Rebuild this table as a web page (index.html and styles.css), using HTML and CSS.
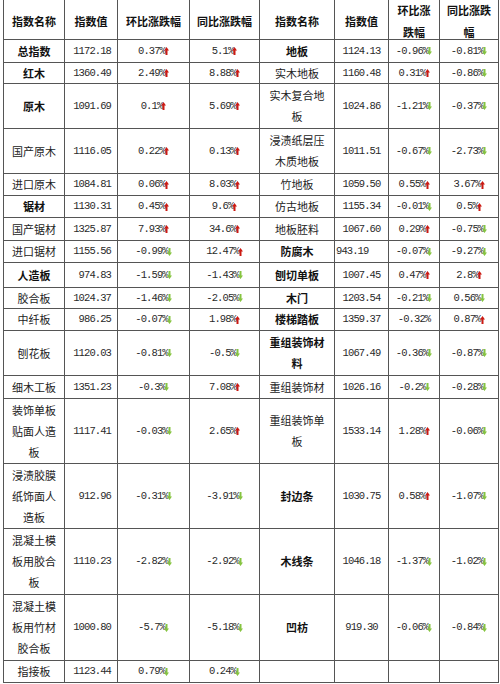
FILE: index.html
```html
<!DOCTYPE html>
<html lang="zh">
<head>
<meta charset="utf-8">
<title>指数表</title>
<link rel="stylesheet" href="styles.css">
</head>
<body>
<div class="sheet">
  <div class="hd">指数名称</div><div class="hd">指数值</div><div class="hd">环比涨跌幅</div><div class="hd">同比涨跌幅</div>
  <div class="hd">指数名称</div><div class="hd">指数值</div><div class="hd">环比涨跌幅</div><div class="hd">同比涨跌幅</div>

  <div class="nm b">总指数</div><div class="lv"><span class="n">1172.18</span></div>
  <div><span class="n">0.37%</span><svg class="ar up" viewBox="0 0 5 8"><path d="M2.5 0L5 3.5H3.5V8h-2V3.5H0z"/></svg></div>
  <div><span class="n">5.1%</span><svg class="ar up" viewBox="0 0 5 8"><path d="M2.5 0L5 3.5H3.5V8h-2V3.5H0z"/></svg></div>
  <div class="nm b">地板</div><div><span class="n">1124.13</span></div>
  <div><span class="n">-0.96%</span><svg class="ar dn" viewBox="0 0 5 8"><path d="M2.5 8L5 4.5H3.5V0h-2v4.5H0z"/></svg></div>
  <div><span class="n">-0.81%</span><svg class="ar dn" viewBox="0 0 5 8"><path d="M2.5 8L5 4.5H3.5V0h-2v4.5H0z"/></svg></div>

  <div class="nm b">红木</div><div class="lv"><span class="n">1360.49</span></div>
  <div><span class="n">2.49%</span><svg class="ar up" viewBox="0 0 5 8"><path d="M2.5 0L5 3.5H3.5V8h-2V3.5H0z"/></svg></div>
  <div><span class="n">8.88%</span><svg class="ar up" viewBox="0 0 5 8"><path d="M2.5 0L5 3.5H3.5V8h-2V3.5H0z"/></svg></div>
  <div class="nm">实木地板</div><div><span class="n">1160.48</span></div>
  <div><span class="n">0.31%</span><svg class="ar up" viewBox="0 0 5 8"><path d="M2.5 0L5 3.5H3.5V8h-2V3.5H0z"/></svg></div>
  <div><span class="n">-0.86%</span><svg class="ar dn" viewBox="0 0 5 8"><path d="M2.5 8L5 4.5H3.5V0h-2v4.5H0z"/></svg></div>

  <div class="nm b">原木</div><div class="lv"><span class="n">1091.69</span></div>
  <div><span class="n">0.1%</span><svg class="ar up" viewBox="0 0 5 8"><path d="M2.5 0L5 3.5H3.5V8h-2V3.5H0z"/></svg></div>
  <div><span class="n">5.69%</span><svg class="ar up" viewBox="0 0 5 8"><path d="M2.5 0L5 3.5H3.5V8h-2V3.5H0z"/></svg></div>
  <div class="nm">实木复合地板</div><div><span class="n">1024.86</span></div>
  <div><span class="n">-1.21%</span><svg class="ar dn" viewBox="0 0 5 8"><path d="M2.5 8L5 4.5H3.5V0h-2v4.5H0z"/></svg></div>
  <div><span class="n">-0.37%</span><svg class="ar dn" viewBox="0 0 5 8"><path d="M2.5 8L5 4.5H3.5V0h-2v4.5H0z"/></svg></div>

  <div class="nm">国产原木</div><div class="lv"><span class="n">1116.05</span></div>
  <div><span class="n">0.22%</span><svg class="ar up" viewBox="0 0 5 8"><path d="M2.5 0L5 3.5H3.5V8h-2V3.5H0z"/></svg></div>
  <div><span class="n">0.13%</span><svg class="ar up" viewBox="0 0 5 8"><path d="M2.5 0L5 3.5H3.5V8h-2V3.5H0z"/></svg></div>
  <div class="nm">浸渍纸层压木质地板</div><div><span class="n">1011.51</span></div>
  <div><span class="n">-0.67%</span><svg class="ar dn" viewBox="0 0 5 8"><path d="M2.5 8L5 4.5H3.5V0h-2v4.5H0z"/></svg></div>
  <div><span class="n">-2.73%</span><svg class="ar dn" viewBox="0 0 5 8"><path d="M2.5 8L5 4.5H3.5V0h-2v4.5H0z"/></svg></div>

  <div class="nm">进口原木</div><div class="lv"><span class="n">1084.81</span></div>
  <div><span class="n">0.06%</span><svg class="ar up" viewBox="0 0 5 8"><path d="M2.5 0L5 3.5H3.5V8h-2V3.5H0z"/></svg></div>
  <div><span class="n">8.03%</span><svg class="ar up" viewBox="0 0 5 8"><path d="M2.5 0L5 3.5H3.5V8h-2V3.5H0z"/></svg></div>
  <div class="nm">竹地板</div><div><span class="n">1059.50</span></div>
  <div><span class="n">0.55%</span><svg class="ar up" viewBox="0 0 5 8"><path d="M2.5 0L5 3.5H3.5V8h-2V3.5H0z"/></svg></div>
  <div><span class="n">3.67%</span><svg class="ar up" viewBox="0 0 5 8"><path d="M2.5 0L5 3.5H3.5V8h-2V3.5H0z"/></svg></div>

  <div class="nm b">锯材</div><div class="lv"><span class="n">1130.31</span></div>
  <div><span class="n">0.45%</span><svg class="ar up" viewBox="0 0 5 8"><path d="M2.5 0L5 3.5H3.5V8h-2V3.5H0z"/></svg></div>
  <div><span class="n">9.6%</span><svg class="ar up" viewBox="0 0 5 8"><path d="M2.5 0L5 3.5H3.5V8h-2V3.5H0z"/></svg></div>
  <div class="nm">仿古地板</div><div><span class="n">1155.34</span></div>
  <div><span class="n">-0.01%</span><svg class="ar dn" viewBox="0 0 5 8"><path d="M2.5 8L5 4.5H3.5V0h-2v4.5H0z"/></svg></div>
  <div><span class="n">0.5%</span><svg class="ar up" viewBox="0 0 5 8"><path d="M2.5 0L5 3.5H3.5V8h-2V3.5H0z"/></svg></div>

  <div class="nm">国产锯材</div><div class="lv"><span class="n">1325.87</span></div>
  <div><span class="n">7.93%</span><svg class="ar up" viewBox="0 0 5 8"><path d="M2.5 0L5 3.5H3.5V8h-2V3.5H0z"/></svg></div>
  <div><span class="n">34.6%</span><svg class="ar up" viewBox="0 0 5 8"><path d="M2.5 0L5 3.5H3.5V8h-2V3.5H0z"/></svg></div>
  <div class="nm">地板胚料</div><div><span class="n">1067.60</span></div>
  <div><span class="n">0.29%</span><svg class="ar up" viewBox="0 0 5 8"><path d="M2.5 0L5 3.5H3.5V8h-2V3.5H0z"/></svg></div>
  <div><span class="n">-0.75%</span><svg class="ar dn" viewBox="0 0 5 8"><path d="M2.5 8L5 4.5H3.5V0h-2v4.5H0z"/></svg></div>

  <div class="nm">进口锯材</div><div class="lv"><span class="n">1155.56</span></div>
  <div><span class="n">-0.99%</span><svg class="ar dn" viewBox="0 0 5 8"><path d="M2.5 8L5 4.5H3.5V0h-2v4.5H0z"/></svg></div>
  <div><span class="n">12.47%</span><svg class="ar up" viewBox="0 0 5 8"><path d="M2.5 0L5 3.5H3.5V8h-2V3.5H0z"/></svg></div>
  <div class="nm b">防腐木</div><div class="ll"><span class="n">943.19</span></div>
  <div><span class="n">-0.07%</span><svg class="ar dn" viewBox="0 0 5 8"><path d="M2.5 8L5 4.5H3.5V0h-2v4.5H0z"/></svg></div>
  <div><span class="n">-9.27%</span><svg class="ar dn" viewBox="0 0 5 8"><path d="M2.5 8L5 4.5H3.5V0h-2v4.5H0z"/></svg></div>

  <div class="nm b">人造板</div><div class="lv"><span class="n">974.83</span></div>
  <div><span class="n">-1.59%</span><svg class="ar dn" viewBox="0 0 5 8"><path d="M2.5 8L5 4.5H3.5V0h-2v4.5H0z"/></svg></div>
  <div><span class="n">-1.43%</span><svg class="ar dn" viewBox="0 0 5 8"><path d="M2.5 8L5 4.5H3.5V0h-2v4.5H0z"/></svg></div>
  <div class="nm b">刨切单板</div><div><span class="n">1007.45</span></div>
  <div><span class="n">0.47%</span><svg class="ar up" viewBox="0 0 5 8"><path d="M2.5 0L5 3.5H3.5V8h-2V3.5H0z"/></svg></div>
  <div><span class="n">2.8%</span><svg class="ar up" viewBox="0 0 5 8"><path d="M2.5 0L5 3.5H3.5V8h-2V3.5H0z"/></svg></div>

  <div class="nm">胶合板</div><div class="lv"><span class="n">1024.37</span></div>
  <div><span class="n">-1.46%</span><svg class="ar dn" viewBox="0 0 5 8"><path d="M2.5 8L5 4.5H3.5V0h-2v4.5H0z"/></svg></div>
  <div><span class="n">-2.05%</span><svg class="ar dn" viewBox="0 0 5 8"><path d="M2.5 8L5 4.5H3.5V0h-2v4.5H0z"/></svg></div>
  <div class="nm b">木门</div><div><span class="n">1203.54</span></div>
  <div><span class="n">-0.21%</span><svg class="ar dn" viewBox="0 0 5 8"><path d="M2.5 8L5 4.5H3.5V0h-2v4.5H0z"/></svg></div>
  <div><span class="n">0.56%</span><svg class="ar dn" viewBox="0 0 5 8"><path d="M2.5 8L5 4.5H3.5V0h-2v4.5H0z"/></svg></div>

  <div class="nm">中纤板</div><div class="lv"><span class="n">986.25</span></div>
  <div><span class="n">-0.07%</span><svg class="ar dn" viewBox="0 0 5 8"><path d="M2.5 8L5 4.5H3.5V0h-2v4.5H0z"/></svg></div>
  <div><span class="n">1.98%</span><svg class="ar up" viewBox="0 0 5 8"><path d="M2.5 0L5 3.5H3.5V8h-2V3.5H0z"/></svg></div>
  <div class="nm b">楼梯踏板</div><div><span class="n">1359.37</span></div>
  <div><span class="n">-0.32%</span></div>
  <div><span class="n">0.87%</span><svg class="ar up" viewBox="0 0 5 8"><path d="M2.5 0L5 3.5H3.5V8h-2V3.5H0z"/></svg></div>

  <div class="nm">刨花板</div><div class="lv"><span class="n">1120.03</span></div>
  <div><span class="n">-0.81%</span><svg class="ar dn" viewBox="0 0 5 8"><path d="M2.5 8L5 4.5H3.5V0h-2v4.5H0z"/></svg></div>
  <div><span class="n">-0.5%</span><svg class="ar dn" viewBox="0 0 5 8"><path d="M2.5 8L5 4.5H3.5V0h-2v4.5H0z"/></svg></div>
  <div class="nm b">重组装饰材料</div><div><span class="n">1067.49</span></div>
  <div><span class="n">-0.36%</span><svg class="ar dn" viewBox="0 0 5 8"><path d="M2.5 8L5 4.5H3.5V0h-2v4.5H0z"/></svg></div>
  <div><span class="n">-0.87%</span><svg class="ar dn" viewBox="0 0 5 8"><path d="M2.5 8L5 4.5H3.5V0h-2v4.5H0z"/></svg></div>

  <div class="nm">细木工板</div><div class="lv"><span class="n">1351.23</span></div>
  <div><span class="n">-0.3%</span><svg class="ar dn" viewBox="0 0 5 8"><path d="M2.5 8L5 4.5H3.5V0h-2v4.5H0z"/></svg></div>
  <div><span class="n">7.08%</span><svg class="ar up" viewBox="0 0 5 8"><path d="M2.5 0L5 3.5H3.5V8h-2V3.5H0z"/></svg></div>
  <div class="nm">重组装饰材</div><div><span class="n">1026.16</span></div>
  <div><span class="n">-0.2%</span><svg class="ar dn" viewBox="0 0 5 8"><path d="M2.5 8L5 4.5H3.5V0h-2v4.5H0z"/></svg></div>
  <div><span class="n">-0.28%</span><svg class="ar dn" viewBox="0 0 5 8"><path d="M2.5 8L5 4.5H3.5V0h-2v4.5H0z"/></svg></div>

  <div class="nm">装饰单板贴面人造板</div><div class="lv"><span class="n">1117.41</span></div>
  <div><span class="n">-0.03%</span><svg class="ar dn" viewBox="0 0 5 8"><path d="M2.5 8L5 4.5H3.5V0h-2v4.5H0z"/></svg></div>
  <div><span class="n">2.65%</span><svg class="ar up" viewBox="0 0 5 8"><path d="M2.5 0L5 3.5H3.5V8h-2V3.5H0z"/></svg></div>
  <div class="nm">重组装饰单板</div><div><span class="n">1533.14</span></div>
  <div><span class="n">1.28%</span><svg class="ar up" viewBox="0 0 5 8"><path d="M2.5 0L5 3.5H3.5V8h-2V3.5H0z"/></svg></div>
  <div><span class="n">-0.06%</span><svg class="ar dn" viewBox="0 0 5 8"><path d="M2.5 8L5 4.5H3.5V0h-2v4.5H0z"/></svg></div>

  <div class="nm">浸渍胶膜纸饰面人造板</div><div class="lv"><span class="n">912.96</span></div>
  <div><span class="n">-0.31%</span><svg class="ar dn" viewBox="0 0 5 8"><path d="M2.5 8L5 4.5H3.5V0h-2v4.5H0z"/></svg></div>
  <div><span class="n">-3.91%</span><svg class="ar dn" viewBox="0 0 5 8"><path d="M2.5 8L5 4.5H3.5V0h-2v4.5H0z"/></svg></div>
  <div class="nm b">封边条</div><div><span class="n">1030.75</span></div>
  <div><span class="n">0.58%</span><svg class="ar up" viewBox="0 0 5 8"><path d="M2.5 0L5 3.5H3.5V8h-2V3.5H0z"/></svg></div>
  <div><span class="n">-1.07%</span><svg class="ar dn" viewBox="0 0 5 8"><path d="M2.5 8L5 4.5H3.5V0h-2v4.5H0z"/></svg></div>

  <div class="nm">混凝土模板用胶合板</div><div class="lv"><span class="n">1110.23</span></div>
  <div><span class="n">-2.82%</span><svg class="ar dn" viewBox="0 0 5 8"><path d="M2.5 8L5 4.5H3.5V0h-2v4.5H0z"/></svg></div>
  <div><span class="n">-2.92%</span><svg class="ar dn" viewBox="0 0 5 8"><path d="M2.5 8L5 4.5H3.5V0h-2v4.5H0z"/></svg></div>
  <div class="nm b">木线条</div><div><span class="n">1046.18</span></div>
  <div><span class="n">-1.37%</span><svg class="ar dn" viewBox="0 0 5 8"><path d="M2.5 8L5 4.5H3.5V0h-2v4.5H0z"/></svg></div>
  <div><span class="n">-1.02%</span><svg class="ar dn" viewBox="0 0 5 8"><path d="M2.5 8L5 4.5H3.5V0h-2v4.5H0z"/></svg></div>

  <div class="nm">混凝土模板用竹材胶合板</div><div class="lv"><span class="n">1000.80</span></div>
  <div><span class="n">-5.7%</span><svg class="ar dn" viewBox="0 0 5 8"><path d="M2.5 8L5 4.5H3.5V0h-2v4.5H0z"/></svg></div>
  <div><span class="n">-5.18%</span><svg class="ar dn" viewBox="0 0 5 8"><path d="M2.5 8L5 4.5H3.5V0h-2v4.5H0z"/></svg></div>
  <div class="nm b">凹枋</div><div><span class="n">919.30</span></div>
  <div><span class="n">-0.06%</span><svg class="ar dn" viewBox="0 0 5 8"><path d="M2.5 8L5 4.5H3.5V0h-2v4.5H0z"/></svg></div>
  <div><span class="n">-0.84%</span><svg class="ar dn" viewBox="0 0 5 8"><path d="M2.5 8L5 4.5H3.5V0h-2v4.5H0z"/></svg></div>

  <div class="nm">指接板</div><div class="lv"><span class="n">1123.44</span></div>
  <div><span class="n">0.79%</span><svg class="ar dn" viewBox="0 0 5 8"><path d="M2.5 8L5 4.5H3.5V0h-2v4.5H0z"/></svg></div>
  <div><span class="n">0.24%</span><svg class="ar dn" viewBox="0 0 5 8"><path d="M2.5 8L5 4.5H3.5V0h-2v4.5H0z"/></svg></div>
  <div></div><div></div><div></div><div></div>
</div>
</body>
</html>
```
FILE: styles.css
```css
html, body {
  margin: 0;
  padding: 0;
  background: #fff;
}

.sheet {
  display: grid;
  grid-template-columns: 61px 53px 72px 70px 75px 54px 51px 59px;
  grid-template-rows: 40px 23px 21px 45px 45px 22px 22px 23px 22px 25px 21px 22px 45px 23px 65px 65px 66px 66px 22px;
  width: max-content;
  margin-left: 3px;
  border-left: 1px solid #555;
  font-family: "Noto Sans CJK SC", "Noto Sans", sans-serif;
  font-size: 11px;
  line-height: 21px;
  color: #1a1a1a;
}

.sheet > div {
  box-sizing: border-box;
  border-right: 1px solid #555;
  border-bottom: 1px solid #555;
  padding: 0 5px;
  display: flex;
  align-items: center;
  justify-content: center;
  text-align: center;
  overflow: hidden;
}

.sheet > .hd {
  font-weight: 700;
  color: #111;
  line-height: 22px;
  padding-top: 2px;
}

.sheet > .nm {
  font-weight: 400;
  color: #222;
}

.sheet > .nm.b {
  font-weight: 700;
  color: #111;
}

.sheet > .lv {
  justify-content: flex-end;
  padding-right: 6px;
}

.sheet > .ll {
  justify-content: flex-start;
  padding-left: 1px;
}

.n {
  font-family: "Liberation Mono", "DejaVu Sans Mono", monospace;
  font-size: 10.5px;
  letter-spacing: -0.9px;
  color: #2a2a2a;
  white-space: nowrap;
}

.ar {
  width: 5px;
  height: 8px;
  margin-left: -1px;
  flex: none;
  fill: currentColor;
}

.ar.up {
  color: #cc1a12;
}

.ar.dn {
  color: #86c440;
}
```
